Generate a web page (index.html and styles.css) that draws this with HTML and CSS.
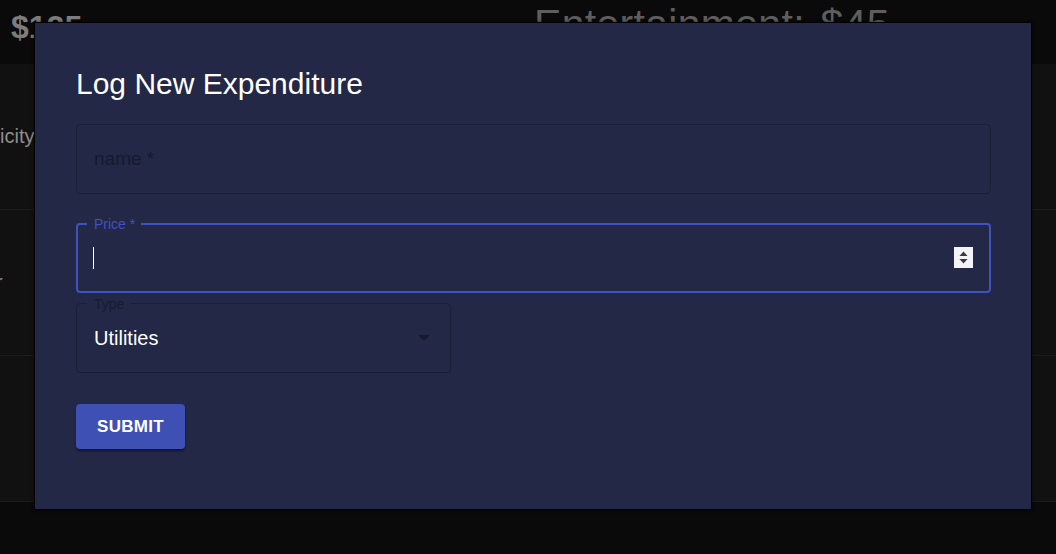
FILE: index.html
```html
<!DOCTYPE html>
<html>
<head>
<meta charset="utf-8">
<link rel="stylesheet" href="styles.css">
</head>
<body>
<div class="page">
  <div class="summary">
    <div class="total">$125</div>
    <div class="category">Entertainment: $45</div>
  </div>
  <div class="row"><span class="row-text">Electricity</span></div>
  <div class="row"><span class="row-text small">Water</span></div>
  <div class="row"></div>
</div>

<div class="modal">
  <h2 class="modal-title">Log New Expenditure</h2>
  <form class="form">
    <div class="field field-name">
      <span class="placeholder">name *</span>
    </div>
    <div class="field field-price">
      <span class="legend legend-blue">Price *</span>
      <span class="caret"></span>
      <span class="spinner">
        <svg width="19" height="21" viewBox="0 0 19 21"><rect width="19" height="21" fill="#f4f4f6"/><path d="M5.5 9 L9.5 4.5 L13.5 9 Z" fill="#3a3a3a"/><path d="M5.5 12 L9.5 16.5 L13.5 12 Z" fill="#3a3a3a"/></svg>
      </span>
    </div>
    <div class="field field-type">
      <span class="legend legend-dim">Type</span>
      <span class="value">Utilities</span>
      <svg class="arrow" width="12" height="6" viewBox="0 0 12 6"><path d="M0 0 L12 0 L6 6 Z" fill="#151a2e"/></svg>
    </div>
    <button type="button" class="submit">SUBMIT</button>
  </form>
</div>
</body>
</html>
```

FILE: styles.css
```css
* { box-sizing: border-box; }
html, body { margin: 0; padding: 0; }
body {
  width: 1056px;
  height: 554px;
  overflow: hidden;
  background: #0a0a0a;
  font-family: "Liberation Sans", Arial, sans-serif;
  position: relative;
}
.page {
  display: flex;
  flex-direction: column;
}
.summary {
  height: 64px;
  background: #0a0a0a;
  display: flex;
  align-items: flex-start;
}
.total {
  color: #7d7d7d;
  font-weight: bold;
  font-size: 32px;
  padding: 9px 0 0 11px;
  width: 534px;
}
.category {
  color: #5e5e5e;
  font-size: 41px;
  padding-top: 1px;
  letter-spacing: 0.3px;
  word-spacing: 4px;
}
.row {
  height: 146px;
  background: #111111;
  border-bottom: 1px solid #1c1c1c;
  display: flex;
  align-items: center;
  overflow: hidden;
}
.row-text {
  color: #8e8e8e;
  font-size: 20px;
  margin-left: -51px;
}
.row-text.small {
  margin-left: -50px;
}
.modal {
  position: absolute;
  left: 34px;
  top: 22px;
  width: 998px;
  height: 488px;
  background: #222846;
  border: 1px solid #000;
  padding: 0 40px 0 41px;
  box-shadow: 0 0 3px rgba(0,0,0,0.6);
}
.modal-title {
  margin: 0;
  padding-top: 44px;
  font-size: 30px;
  font-weight: normal;
  color: #ffffff;
  line-height: 34px;
  height: 101px;
}
.form {
  display: flex;
  flex-direction: column;
  align-items: flex-start;
}
.field {
  position: relative;
  height: 70px;
  border-radius: 4px;
  display: flex;
  align-items: center;
  padding-left: 17px;
}
.field-name {
  width: 915px;
  border: 1px solid #1b2039;
}
.placeholder {
  color: #151a30;
  font-size: 19px;
}
.field-price {
  width: 915px;
  margin-top: 29px;
  border: 2px solid #4051c0;
  padding-left: 15px;
}
.legend {
  position: absolute;
  top: -9px;
  left: 9px;
  padding: 0 6px 0 7px;
  font-size: 14px;
  line-height: 16px;
  background: #222846;
}
.legend-blue { color: #4051c0; }
.legend-dim { color: #171c33; left: 10px; top: -8px; }
.caret {
  width: 1px;
  height: 22px;
  background: #ffffff;
}
.spinner {
  position: absolute;
  right: 16px;
  top: 22px;
  display: block;
  line-height: 0;
}
.field-type {
  width: 375px;
  margin-top: 10px;
  border: 1px solid #1a1f38;
  justify-content: space-between;
  padding-right: 20px;
}
.value {
  color: #ffffff;
  font-size: 20px;
}
.submit {
  margin-top: 31px;
  width: 109px;
  height: 45px;
  background: #3f50b5;
  color: #ffffff;
  border: none;
  border-radius: 4px;
  font-family: "Liberation Sans", Arial, sans-serif;
  font-size: 17px;
  font-weight: bold;
  letter-spacing: 0.3px;
  box-shadow: 0 3px 2px -1px rgba(0,0,0,0.3), 0 2px 3px rgba(0,0,0,0.2);
  cursor: pointer;
}
```
